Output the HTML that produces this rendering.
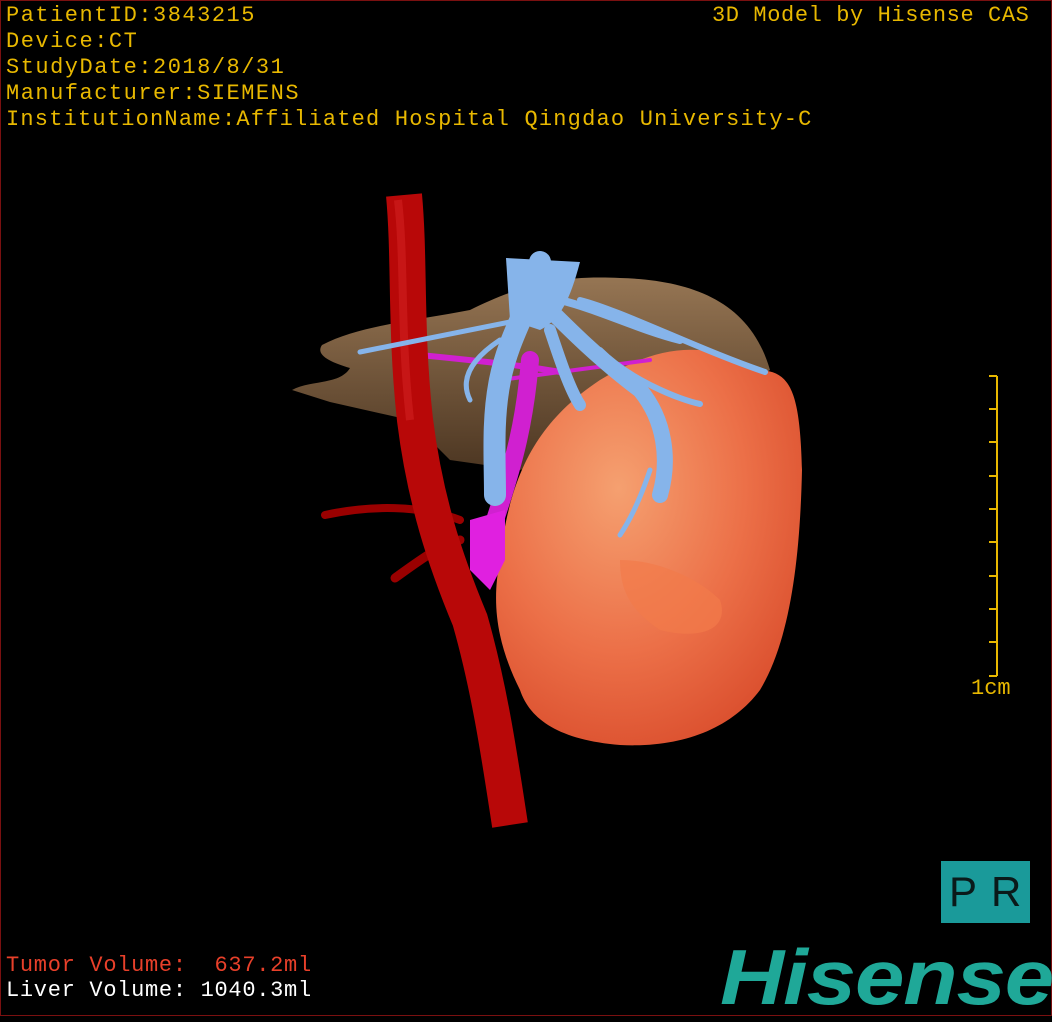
<!DOCTYPE html>
<html><head><meta charset="utf-8"><style>
body{margin:0;background:#000;width:1052px;height:1020px;overflow:hidden;position:relative;font-family:"Liberation Mono",monospace}
.frame{position:absolute;left:0;top:0;width:1050px;height:1014px;border:1px solid #7a1010}
.t{position:absolute;color:#e8b800;font-size:22px;letter-spacing:1.5px;white-space:pre;line-height:26px}
</style></head><body>
<svg width="1052" height="1020" style="position:absolute;left:0;top:0">
<defs>
<radialGradient id="tg" cx="0.4" cy="0.35" r="0.75"><stop offset="0" stop-color="#f5a070"/><stop offset="0.55" stop-color="#ec7048"/><stop offset="1" stop-color="#d84a2a"/></radialGradient>
<linearGradient id="lg" x1="0" y1="0" x2="0" y2="1"><stop offset="0" stop-color="#b08a62"/><stop offset="1" stop-color="#5a4028"/></linearGradient>
</defs>
<path d="M292,390 C310,380 340,385 350,368 C330,362 315,355 322,345 C360,325 420,320 470,310 C520,285 560,275 620,278 C690,280 750,300 770,370 L700,420 L520,470 L450,460 L410,420 L330,402 Z" fill="url(#lg)" opacity="0.85"/>
<path d="M500,560 C510,470 540,420 600,380 C650,350 700,335 760,370 C790,372 800,390 802,470 C800,560 790,640 760,690 C730,730 680,748 620,745 C560,740 530,720 520,690 C495,640 492,600 500,560 Z" fill="url(#tg)"/>
<path d="M620,560 C660,560 700,580 720,600 C730,630 700,640 660,630 C630,610 620,590 620,560Z" fill="#f27a4a" opacity="0.7"/>
<g stroke="#d020d0" fill="none" stroke-linecap="round">
<path d="M530,360 C525,420 515,460 495,520" stroke-width="18"/>
<path d="M420,355 C470,360 520,365 560,372" stroke-width="6"/>
<path d="M500,380 L650,360" stroke-width="4"/>
</g>
<path d="M470,520 L505,510 L505,560 L490,590 L470,570Z" fill="#e020e0"/>
<g stroke="#9a0000" fill="none" stroke-linecap="round">
<path d="M325,515 C370,505 420,505 460,520" stroke-width="8"/>
<path d="M395,578 C420,560 440,545 460,540" stroke-width="9"/>
</g>
<path d="M404,195 C410,260 405,330 415,420 C425,500 445,560 470,620 C490,690 500,760 510,825" stroke="#b80808" stroke-width="36" fill="none"/>
<path d="M398,200 C405,260 400,330 410,420" stroke="#d02020" stroke-width="8" fill="none" opacity="0.6"/>
<g stroke="#86b4ea" fill="none" stroke-linecap="round">
<path d="M540,262 C535,300 510,330 500,380 C492,420 495,460 495,495" stroke-width="22"/>
<path d="M540,300 C570,330 600,360 640,390 C665,420 670,460 660,495" stroke-width="16"/>
<path d="M560,300 C600,310 640,330 680,340" stroke-width="8"/>
<path d="M580,300 C620,310 700,350 765,372" stroke-width="6"/>
<path d="M520,320 C470,330 420,340 360,352" stroke-width="5"/>
<path d="M550,330 C560,360 570,390 580,405" stroke-width="12"/>
<path d="M600,350 C630,380 680,400 700,404" stroke-width="6"/>
<path d="M650,470 C640,500 630,520 620,535" stroke-width="5"/>
<path d="M500,340 C470,360 460,380 470,400" stroke-width="5"/>
</g>
<path d="M506,258 L580,262 C570,300 560,320 540,330 L510,320Z" fill="#86b4ea"/>
<g stroke="#e8b800" stroke-width="2">
<line x1="997" y1="376" x2="997" y2="676"/>
<line x1="989" y1="376" x2="997" y2="376"/><line x1="989" y1="409" x2="997" y2="409"/><line x1="989" y1="442" x2="997" y2="442"/><line x1="989" y1="476" x2="997" y2="476"/><line x1="989" y1="509" x2="997" y2="509"/><line x1="989" y1="542" x2="997" y2="542"/><line x1="989" y1="576" x2="997" y2="576"/><line x1="989" y1="609" x2="997" y2="609"/><line x1="989" y1="642" x2="997" y2="642"/><line x1="989" y1="676" x2="997" y2="676"/>
</g>
</svg>
<div class="frame"></div>
<div class="t" style="left:6px;top:3px">PatientID:3843215
Device:CT
StudyDate:2018/8/31
Manufacturer:SIEMENS</div>
<div class="t" style="left:6px;top:107px;letter-spacing:1.2px">InstitutionName:Affiliated Hospital Qingdao University-C</div>
<div class="t" style="left:712px;top:3px;letter-spacing:0.6px">3D Model by Hisense CAS</div>
<div class="t" style="left:971px;top:676px;letter-spacing:0">1cm</div>
<div class="t" style="left:6px;top:953px;color:#e8402a;letter-spacing:0.7px">Tumor Volume:  637.2ml</div>
<div class="t" style="left:6px;top:978px;color:#fff;letter-spacing:0.7px">Liver Volume: 1040.3ml</div>
<div style="position:absolute;left:941px;top:861px;width:89px;height:62px;background:#1a9a9a;color:#0a1a1a;font-family:'Liberation Sans',sans-serif;font-size:42px;line-height:62px;text-align:center;letter-spacing:14px;padding-left:8px;box-sizing:border-box">PR</div>
<div style="position:absolute;left:720px;top:932px;color:#1fa898;font-family:'Liberation Sans',sans-serif;font-weight:bold;font-style:italic;font-size:78px;line-height:90px;letter-spacing:-1px;transform:scaleX(1.14);transform-origin:left top">Hisense</div>
</body></html>
